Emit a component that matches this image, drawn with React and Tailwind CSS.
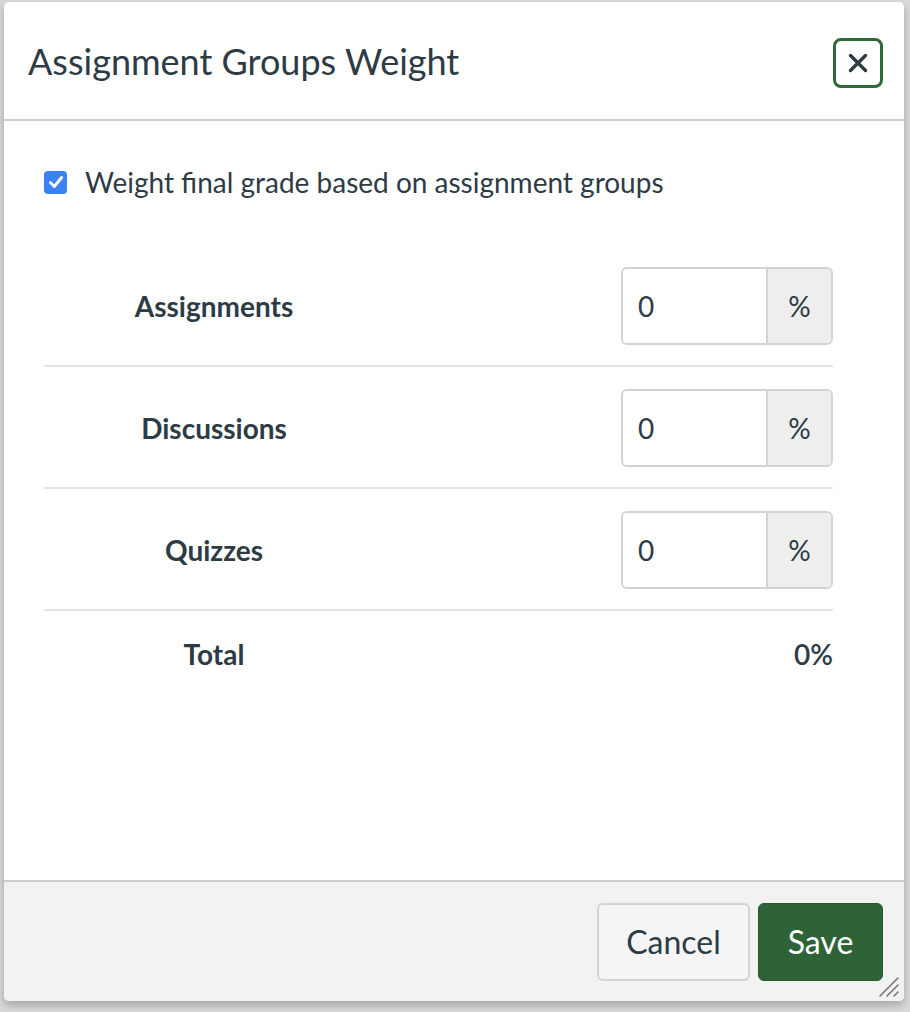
import React from 'react';

const groups = [
  { id: 1, name: 'Assignments', weight: '0' },
  { id: 2, name: 'Discussions', weight: '0' },
  { id: 3, name: 'Quizzes', weight: '0' },
];

const App = () => {
  return (
    <div
      className="w-[910px] h-[1012px] bg-[#dadada] pl-[4px] pt-[2px] overflow-hidden"
      style={{ fontFamily: 'Lato, "Open Sans", sans-serif' }}
    >
      <div className="relative w-[900px] h-[999px] bg-white rounded-[5px] shadow-[0_4px_10px_rgba(0,0,0,0.25)] flex flex-col overflow-hidden text-[#2d3b45]">
        {/* header */}
        <div className="h-[119px] shrink-0 flex items-center justify-between pl-[24px] pr-[21px] border-b-2 border-[#c7cdd1]">
          <h2 className="text-[36px] leading-none font-normal">Assignment Groups Weight</h2>
          <button className="mt-[4px] w-[50px] h-[50px] rounded-[8px] border-[3px] border-[#2d6a38] flex items-center justify-center">
            <svg width="20" height="20" viewBox="0 0 20 20">
              <path d="M2.5 2.5L17.5 17.5M17.5 2.5L2.5 17.5" stroke="#2d3b45" strokeWidth="3.4" strokeLinecap="round" />
            </svg>
          </button>
        </div>

        {/* body */}
        <div className="flex-1 pl-[40px] pt-[43px]">
          <label className="flex items-center h-[36px]">
            <span className="w-[23px] h-[23px] rounded-[4px] bg-[#3a83f7] flex items-center justify-center">
              <svg width="18" height="18" viewBox="0 0 16 16">
                <path d="M3 8.5L6.5 12L13 4" fill="none" stroke="white" strokeWidth="2.6" strokeLinecap="round" strokeLinejoin="round" />
              </svg>
            </span>
            <span className="ml-[18px] text-[28px] leading-none">Weight final grade based on assignment groups</span>
          </label>

          <div className="w-[789px] mt-[45px]">
            {groups.map((g) => (
              <div key={g.id} className="flex items-center justify-between pt-[22px] pb-[20px] border-b-2 border-[#e2e5e7]">
                <div className="w-[340px] text-center text-[28px] font-bold">{g.name}</div>
                <div className="flex h-[78px] w-[212px] border-2 border-[#d0d4d7] rounded-[6px] overflow-hidden">
                  <div className="flex-1 bg-white flex items-center pl-[15px] text-[28px]">{g.weight}</div>
                  <div className="w-[65px] bg-[#eeeeee] border-l-2 border-[#d0d4d7] flex items-center justify-center text-[28px]">%</div>
                </div>
              </div>
            ))}
            <div className="flex items-center justify-between h-[86px]">
              <div className="w-[340px] text-center text-[28px] font-bold">Total</div>
              <div className="text-[28px] font-semibold">0%</div>
            </div>
          </div>
        </div>

        {/* footer */}
        <div className="h-[121px] shrink-0 bg-[#f2f2f2] border-t-2 border-[#c7cdd1] flex justify-end items-start pt-[21px] pr-[21px] gap-[8px]">
          <button className="h-[78px] w-[153px] rounded-[6px] bg-[#f5f5f5] border-2 border-[#d0d4d7] text-[32px] text-[#2d3b45]">Cancel</button>
          <button className="h-[78px] w-[125px] rounded-[6px] bg-[#2e6337] border border-[#27562f] text-[32px] text-white">Save</button>
        </div>

        {/* resize handle */}
        <svg className="absolute right-[4px] bottom-[3px]" width="24" height="24" viewBox="0 0 24 24">
          <path d="M22 4L4 22M22 11L11 22M22 18L18 22" stroke="#777" strokeWidth="1.6" strokeLinecap="round" />
        </svg>
      </div>
    </div>
  );
};

export default App;
